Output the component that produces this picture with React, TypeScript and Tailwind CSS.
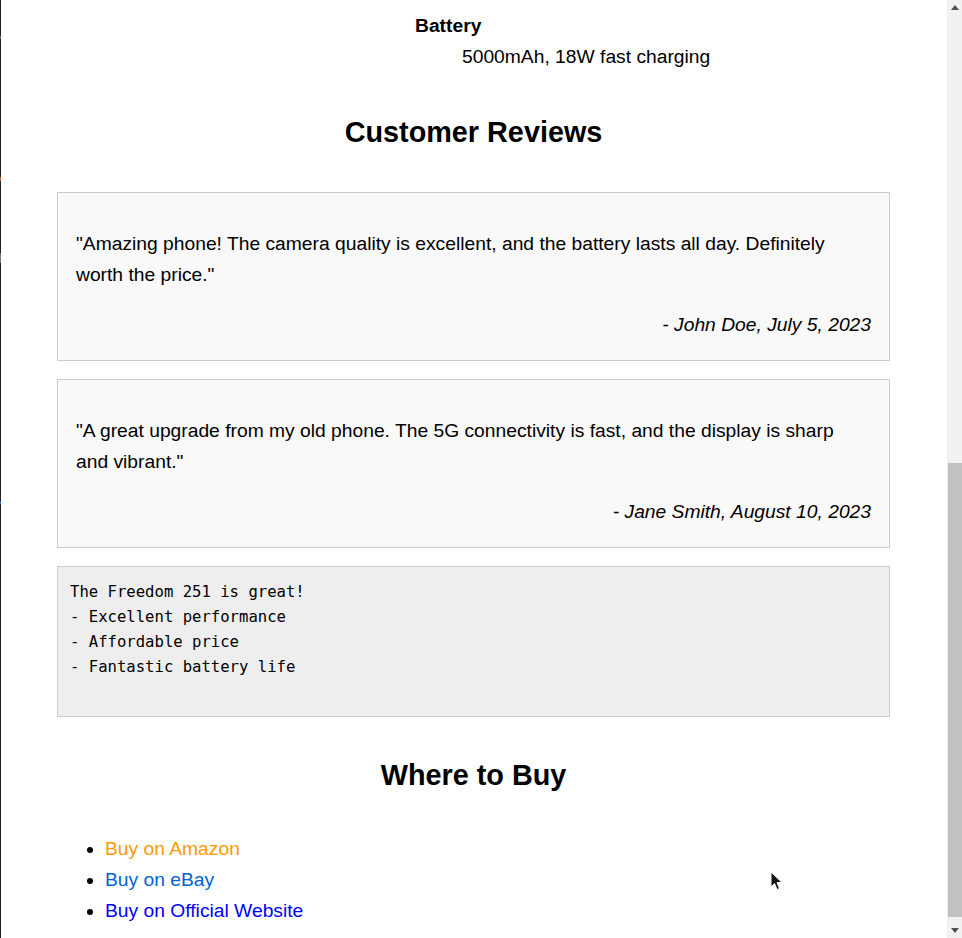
const reviews = [
  {
    text: '"Amazing phone! The camera quality is excellent, and the battery lasts all day. Definitely worth the price."',
    author: "- John Doe, July 5, 2023",
  },
  {
    text: '"A great upgrade from my old phone. The 5G connectivity is fast, and the display is sharp and vibrant."',
    author: "- Jane Smith, August 10, 2023",
  },
];

const stores = [
  { label: "Buy on Amazon", color: "text-[#ff9900]" },
  { label: "Buy on eBay", color: "text-[#0064d2]" },
  { label: "Buy on Official Website", color: "text-[#0000ff]" },
];

const Scrollbar = () => {
  return (
    <div className="flex w-[15px] shrink-0 flex-col bg-[#f1f1f1]">
      <div className="flex h-[15px] items-center justify-center">
        <svg width="8" height="5" viewBox="0 0 8 5">
          <path d="M4 0 L8 5 L0 5 Z" fill="#505050" />
        </svg>
      </div>
      <div className="h-[448px]" />
      <div className="ml-px h-[454px] bg-[#c1c1c1]" />
      <div className="flex-1" />
      <div className="flex h-[15px] items-center justify-center">
        <svg width="8" height="5" viewBox="0 0 8 5">
          <path d="M0 0 L8 0 L4 5 Z" fill="#505050" />
        </svg>
      </div>
    </div>
  );
};

const App = () => {
  return (
    <div className="flex h-[938px] w-full overflow-hidden bg-white font-['Liberation_Sans',Arial,sans-serif] text-[19.25px] text-black">
      {/* left edge strip */}
      <div className="flex w-px shrink-0 flex-col bg-[#1f2023]">
        <div className="h-[36px]" />
        <div className="h-[3px] bg-[#5b6b80]" />
        <div className="h-[138px]" />
        <div className="h-[4px] bg-[#c0703a]" />
        <div className="h-[72px]" />
        <div className="h-[10px] bg-[#7a7d80]" />
        <div className="h-[238px]" />
        <div className="h-[3px] bg-[#3d6fb0]" />
      </div>

      <div className="relative flex-1">
        <div className="ml-[56px] w-[833px] pt-[11px]">
          {/* spec row */}
          <dl className="ml-[358px] leading-[30.72px]">
            <dt className="font-bold">Battery</dt>
            <dd className="ml-[47px]">5000mAh, 18W fast charging</dd>
          </dl>

          <h2 className="mt-[36px] text-center text-[28.8px] font-bold leading-[49px]">
            Customer Reviews
          </h2>

          <div className="mt-[35px] flex flex-col gap-[18px]">
            {reviews.map((r) => (
              <div
                key={r.author}
                className="h-[169px] border border-[#cccccc] bg-[#f9f9f9] px-[18px] pt-[18px] leading-[30.72px]"
              >
                <p className="mt-[18px] mr-[4px] mb-[19px]">{r.text}</p>
                <p className="text-right italic">{r.author}</p>
              </div>
            ))}
            <pre className="h-[151px] border border-[#cccccc] bg-[#eeeeee] px-[12px] pt-[13px] font-['DejaVu_Sans_Mono',monospace] text-[15.6px] leading-[25px]">
              {"The Freedom 251 is great!\n- Excellent performance\n- Affordable price\n- Fantastic battery life"}
            </pre>
          </div>

          <h2 className="mt-[34px] text-center text-[28.8px] font-bold leading-[49px]">
            Where to Buy
          </h2>

          <ul className="mt-[34px] list-disc pl-[48px] leading-[30.72px]">
            {stores.map((s) => (
              <li key={s.label}>
                <a href="#" className={s.color}>
                  {s.label}
                </a>
              </li>
            ))}
          </ul>
        </div>

        {/* mouse pointer */}
        <svg
          className="absolute left-[769px] top-[871px]"
          width="13"
          height="20"
          viewBox="0 0 13 20"
        >
          <path
            d="M1 1 L1 16 L4.5 12.5 L7 18.5 L9.5 17.5 L7 11.5 L12 11.5 Z"
            fill="#111"
            stroke="#fff"
            strokeWidth="1"
          />
        </svg>
      </div>

      <Scrollbar />
    </div>
  );
};

export default App;
